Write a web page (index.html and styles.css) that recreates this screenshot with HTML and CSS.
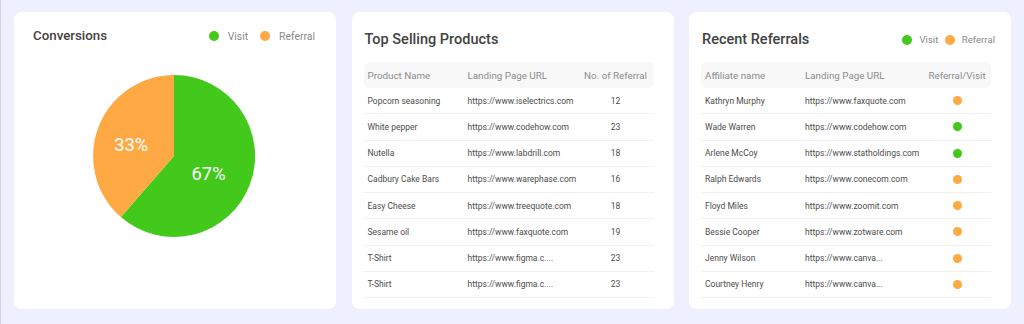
FILE: index.html
```html
<!DOCTYPE html>
<html lang="en">
<head>
<meta charset="utf-8">
<title>Dashboard</title>
<link rel="stylesheet" href="styles.css">
</head>
<body>
<main class="board">
  <section class="card conv">
    <div class="conv-head">
      <h2 class="conv-title">Conversions</h2>
      <div class="legend legend-lg">
        <span class="dot green"></span><span class="lg-txt">Visit</span>
        <span class="dot orange"></span><span class="lg-txt">Referral</span>
      </div>
    </div>
    <div class="pie-wrap">
      <svg class="pie" width="162" height="162" viewBox="0 0 162 162">
        <path d="M81 81 L81 0 A81 81 0 1 1 27.9 142.1 Z" fill="#42c91b"/>
        <path d="M81 81 L27.9 142.1 A81 81 0 0 1 81 0 Z" fill="#ffa945"/>
      </svg>
      <span class="pie-label lbl-ref">33%</span>
      <span class="pie-label lbl-visit">67%</span>
    </div>
  </section>

  <section class="card tbl-card">
    <div class="card-head">
      <h2 class="card-title">Top Selling Products</h2>
    </div>
    <div class="tbl products">
      <div class="row head"><span class="c1">Product Name</span><span class="c2">Landing Page URL</span><span class="c3">No. of Referral</span></div>
      <div class="row"><span class="c1">Popcorn seasoning</span><span class="c2">https://www.iselectrics.com</span><span class="c3">12</span></div>
      <div class="row"><span class="c1">White pepper</span><span class="c2">https://www.codehow.com</span><span class="c3">23</span></div>
      <div class="row"><span class="c1">Nutella</span><span class="c2">https://www.labdrill.com</span><span class="c3">18</span></div>
      <div class="row"><span class="c1">Cadbury Cake Bars</span><span class="c2">https://www.warephase.com</span><span class="c3">16</span></div>
      <div class="row"><span class="c1">Easy Cheese</span><span class="c2">https://www.treequote.com</span><span class="c3">18</span></div>
      <div class="row"><span class="c1">Sesame oil</span><span class="c2">https://www.faxquote.com</span><span class="c3">19</span></div>
      <div class="row"><span class="c1">T-Shirt</span><span class="c2">https://www.figma.c....</span><span class="c3">23</span></div>
      <div class="row"><span class="c1">T-Shirt</span><span class="c2">https://www.figma.c....</span><span class="c3">23</span></div>
    </div>
  </section>

  <section class="card tbl-card">
    <div class="card-head">
      <h2 class="card-title">Recent Referrals</h2>
      <div class="legend legend-sm">
        <span class="dot green"></span><span class="lg-txt">Visit</span>
        <span class="dot orange"></span><span class="lg-txt">Referral</span>
      </div>
    </div>
    <div class="tbl referrals">
      <div class="row head"><span class="c1">Affiliate name</span><span class="c2">Landing Page URL</span><span class="c3">Referral/Visit</span></div>
      <div class="row"><span class="c1">Kathryn Murphy</span><span class="c2">https://www.faxquote.com</span><span class="c3"><i class="sdot orange"></i></span></div>
      <div class="row"><span class="c1">Wade Warren</span><span class="c2">https://www.codehow.com</span><span class="c3"><i class="sdot green"></i></span></div>
      <div class="row"><span class="c1">Arlene McCoy</span><span class="c2">https://www.statholdings.com</span><span class="c3"><i class="sdot green"></i></span></div>
      <div class="row"><span class="c1">Ralph Edwards</span><span class="c2">https://www.conecom.com</span><span class="c3"><i class="sdot orange"></i></span></div>
      <div class="row"><span class="c1">Floyd Miles</span><span class="c2">https://www.zoomit.com</span><span class="c3"><i class="sdot orange"></i></span></div>
      <div class="row"><span class="c1">Bessie Cooper</span><span class="c2">https://www.zotware.com</span><span class="c3"><i class="sdot orange"></i></span></div>
      <div class="row"><span class="c1">Jenny Wilson</span><span class="c2">https://www.canva...</span><span class="c3"><i class="sdot orange"></i></span></div>
      <div class="row"><span class="c1">Courtney Henry</span><span class="c2">https://www.canva...</span><span class="c3"><i class="sdot orange"></i></span></div>
    </div>
  </section>
</main>
</body>
</html>
```

FILE: styles.css
```css
* { box-sizing: border-box; }
html, body { margin: 0; padding: 0; }
body {
  background: #eef0fd;
  font-family: Roboto, "Noto Sans", sans-serif;
  color: #333;
  width: 1024px;
  height: 324px;
  overflow: hidden;
}
.board {
  display: grid;
  grid-template-columns: 322px 322px 322px;
  column-gap: 15.5px;
  padding: 12px 13px 15px 13px;
  border-left: 1px solid #d3d5e6;
  height: 324px;
}
.card {
  background: #fff;
  border-radius: 8px;
  height: 297px;
  position: relative;
}
h2 { margin: 0; }

/* conversions */
.conv { padding: 14px 21px 0 19px; display: flex; flex-direction: column; }
.conv-head { display: flex; align-items: center; justify-content: space-between; height: 20px; }
.conv-title { font-size: 13.3px; font-weight: 500; line-height: 20px; color: #424242; }
.legend { display: flex; align-items: center; }
.dot { display: inline-block; width: 10px; height: 10px; border-radius: 50%; }
.green { background: #42c91b; }
.orange { background: #ffa945; }
.lg-txt { color: #8a8a8a; }
.legend-lg { font-size: 10.4px; }
.legend-lg .lg-txt { margin-left: 9px; margin-right: 12px; }
.legend-lg .lg-txt:last-child { margin-right: 0; }
.legend-sm { font-size: 9.6px; }
.legend-sm .lg-txt { margin-left: 7px; margin-right: 6.5px; }
.legend-sm .lg-txt:last-child { margin-right: 0; }

.pie-wrap { position: relative; width: 162px; height: 162px; margin: 29px auto 0; }
.pie { display: block; }
.pie-label { position: absolute; color: #fff; font-size: 18.3px; line-height: 20px; }
.lbl-ref { left: 21.3px; top: 60px; }
.lbl-visit { left: 98.6px; top: 88.6px; }

/* tables */
.tbl-card { padding: 17.5px 0 0 12px; }
.card-head { display: flex; align-items: center; justify-content: space-between; height: 20px; width: 294px; padding-left: 1px; }
.card-title { font-size: 14.5px; font-weight: 500; line-height: 20px; color: #424242; }
.tbl { margin-top: 12.5px; width: 290px; }
.row {
  display: flex;
  align-items: center;
  height: 26.25px;
  border-bottom: 1px solid #f1f1f2;
  font-size: 8.5px;
  color: #4d4d4d;
  white-space: nowrap;
}
.row.head {
  height: 26px;
  background: #f8f8f9;
  border-radius: 6px;
  border-bottom: none;
  color: #8c8c8c;
  font-size: 9.8px;
}
.c1 { width: 104px; flex-shrink: 0; padding-left: 4px; }
.c2 { flex: 1; min-width: 0; }
.c3 { text-align: center; margin-right: 3px; flex-shrink: 0; }
.products .c3 { width: 70px; }
.referrals .c3 { width: 62px; display: flex; justify-content: center; }
.sdot { display: block; width: 9px; height: 9px; border-radius: 50%; }
```
